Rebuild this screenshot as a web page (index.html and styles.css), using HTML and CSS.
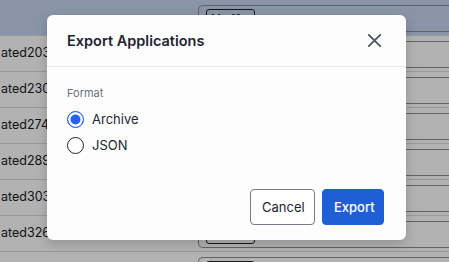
FILE: index.html
```html
<!DOCTYPE html>
<html>
<head>
<meta charset="utf-8">
<link rel="stylesheet" href="styles.css">
</head>
<body>
<div class="table">
  <div class="row head-row">
    <div class="cell-name"></div>
    <div class="cell-box"><div class="box"><span class="chip">Mo 12</span></div></div>
  </div>
  <div class="row"><div class="cell-name">ated2031</div><div class="cell-box"><div class="box"><span class="chip"></span></div></div></div>
  <div class="row"><div class="cell-name">ated2305</div><div class="cell-box"><div class="box"><span class="chip"></span></div></div></div>
  <div class="row"><div class="cell-name">ated2746</div><div class="cell-box"><div class="box"><span class="chip"></span></div></div></div>
  <div class="row"><div class="cell-name">ated2891</div><div class="cell-box"><div class="box"><span class="chip"></span></div></div></div>
  <div class="row"><div class="cell-name">ated3032</div><div class="cell-box"><div class="box"><span class="chip"></span></div></div></div>
  <div class="row"><div class="cell-name">ated3267</div><div class="cell-box"><div class="box"><span class="chip"></span></div></div></div>
  <div class="row"><div class="cell-name"></div><div class="cell-box"><div class="box"><span class="chip"></span></div></div></div>
</div>
<div class="overlay"></div>
<div class="modal">
  <div class="modal-head">
    <h2 class="title">Export Applications</h2>
    <button class="close" aria-label="Close">
      <svg width="13" height="13" viewBox="0 0 13 13"><path d="M0.8 0.8 L12.2 12.2 M12.2 0.8 L0.8 12.2" stroke="#4b5260" stroke-width="1.8" stroke-linecap="round" fill="none"/></svg>
    </button>
  </div>
  <div class="modal-body">
    <div class="label">Format</div>
    <div class="options">
      <label class="option"><span class="radio checked"></span><span>Archive</span></label>
      <label class="option"><span class="radio"></span><span>JSON</span></label>
    </div>
  </div>
  <div class="modal-foot">
    <button class="btn btn-secondary">Cancel</button>
    <button class="btn btn-primary">Export</button>
  </div>
</div>
</body>
</html>
```
FILE: styles.css
```css
* { box-sizing: border-box; }
html, body { margin: 0; padding: 0; }
body {
  width: 449px;
  height: 262px;
  overflow: hidden;
  font-family: Inter, "Noto Sans", sans-serif;
  background: #fff;
  position: relative;
}
.table { display: flex; flex-direction: column; }
.row {
  display: flex;
  height: 36px;
  border-bottom: 1px solid #dcdcdc;
  background: #fff;
  flex-shrink: 0;
}
.head-row { background: #c6d4f3; }
.cell-name {
  width: 198px;
  flex-shrink: 0;
  display: flex;
  align-items: center;
  padding-left: 1px;
  font-size: 12.5px;
  color: #1a1a1a;
  padding-bottom: 2px;
}
.cell-box { flex: 1; min-width: 0; overflow: hidden; padding-top: 5px; }
.box {
  width: 300px;
  height: 27px;
  border: 1px solid #868d9b;
  border-right: none;
  border-radius: 5px 0 0 5px;
  padding: 3px 7px;
}
.chip {
  display: block;
  width: 49px;
  height: 19px;
  border: 1px solid #222;
  border-radius: 3px;
  font-size: 11px;
  line-height: 17px;
  padding-left: 4px;
  color: #222;
}
.overlay {
  position: absolute;
  inset: 0;
  background: rgba(0, 0, 0, 0.3);
}
.modal {
  position: absolute;
  left: 47px;
  top: 15px;
  width: 359px;
  height: 225px;
  background: #fdfdfd;
  border-radius: 6px;
  box-shadow: 0 4px 12px rgba(0, 0, 0, 0.18);
  display: flex;
  flex-direction: column;
}
.modal-head {
  height: 52px;
  padding: 0 22px 0 20px;
  display: flex;
  align-items: center;
  justify-content: space-between;
  border-bottom: 1px solid #e8e8eb;
}
.title {
  margin: 0;
  font-size: 14.5px;
  font-weight: 600;
  color: #1f2430;
}
.close {
  width: 20px;
  height: 20px;
  padding: 0;
  border: none;
  background: none;
  display: flex;
  align-items: center;
  justify-content: center;
}
.modal-body { padding: 18px 20px 0; }
.label {
  font-size: 11px;
  line-height: 16px;
  color: #6b7080;
}
.options {
  margin-top: 8px;
  display: flex;
  flex-direction: column;
  gap: 6px;
}
.option {
  display: flex;
  align-items: center;
  gap: 8px;
  height: 20px;
  font-size: 13px;
  color: #222733;
}
.radio {
  width: 17px;
  height: 17px;
  border-radius: 50%;
  border: 1.5px solid #1f2328;
  background: #fff;
}
.radio.checked {
  border-color: #2563eb;
  background: #2563eb;
  box-shadow: inset 0 0 0 2.5px #fff;
}
.modal-foot {
  margin-top: auto;
  padding: 0 22px 15px;
  display: flex;
  justify-content: flex-end;
  gap: 7px;
}
.btn {
  height: 36px;
  border-radius: 4px;
  font-family: Inter, "Noto Sans", sans-serif;
  font-size: 13px;
  padding: 0 11px;
}
.btn-secondary {
  width: 65px;
  background: #fff;
  border: 1px solid #737b8b;
  color: #1f2430;
}
.btn-primary {
  width: 62px;
  background: #1f5fd6;
  border: 1px solid #1f5fd6;
  color: #fff;
  font-weight: 500;
}
```
